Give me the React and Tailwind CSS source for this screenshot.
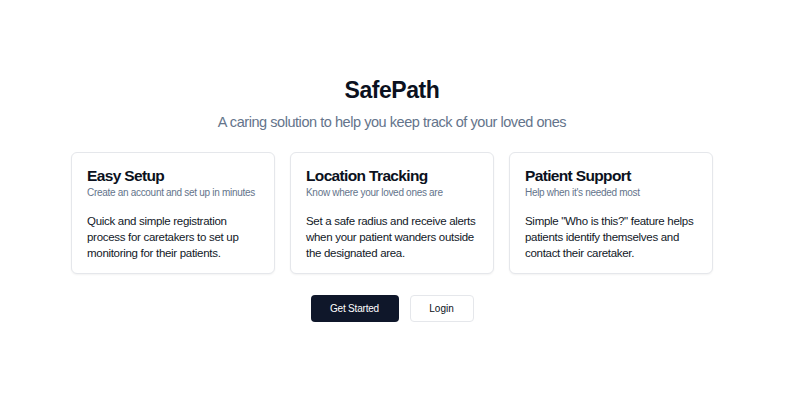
export default function App() {
  const cards = [
    {
      title: "Easy Setup",
      sub: "Create an account and set up in minutes",
      body: "Quick and simple registration process for caretakers to set up monitoring for their patients.",
    },
    {
      title: "Location Tracking",
      sub: "Know where your loved ones are",
      body: "Set a safe radius and receive alerts when your patient wanders outside the designated area.",
    },
    {
      title: "Patient Support",
      sub: "Help when it's needed most",
      body: 'Simple "Who is this?" feature helps patients identify themselves and contact their caretaker.',
    },
  ];
  return (
    <div
      className="min-h-[412px] w-full bg-white flex flex-col items-center pr-[22px] pt-[74px]"
      style={{ fontFamily: '"Liberation Sans", Arial, sans-serif' }}
    >
      <h1 className="text-[23px] leading-[32px] font-bold text-[#0b1120] tracking-[-0.45px]">SafePath</h1>
      <p className="mt-[5px] text-[14.5px] leading-[22px] text-[#64748b] tracking-[-0.45px]">
        A caring solution to help you keep track of your loved ones
      </p>
      <div className="mt-[19px] grid grid-cols-3 gap-[15px] w-[642px]">
        {cards.map((c) => (
          <div
            key={c.title}
            className="h-[122px] rounded-[6px] border border-[#e5e7eb] bg-white shadow-[0_1px_2px_rgba(0,0,0,0.05)] pl-[15px] pr-[12px] pt-[12px]"
          >
            <h3 className="text-[15.5px] leading-[22px] font-bold text-[#0b1120] tracking-[-0.65px]">{c.title}</h3>
            <p className="-mt-[1px] text-[10px] leading-[14px] text-[#64748b] tracking-[-0.3px]">{c.sub}</p>
            <p className="mt-[13px] text-[11.5px] leading-[16px] text-[#111827] tracking-[-0.3px]">{c.body}</p>
          </div>
        ))}
      </div>
      <div className="mt-[21px] flex gap-[11px]">
        <button className="w-[88px] h-[27px] rounded-[4px] bg-[#0f172a] text-white text-[10px] tracking-[-0.2px]">
          Get Started
        </button>
        <button className="w-[64px] h-[27px] rounded-[4px] border border-[#e5e7eb] bg-white text-[#0b1120] text-[10px]">
          Login
        </button>
      </div>
    </div>
  );
}
